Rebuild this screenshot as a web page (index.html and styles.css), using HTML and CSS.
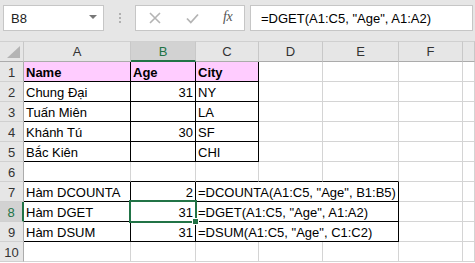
FILE: index.html
```html
<!DOCTYPE html>
<html>
<head>
<meta charset="utf-8">
<link rel="stylesheet" href="styles.css">
</head>
<body>
<div class="app">
  <div class="toolbar">
    <div class="namebox"><span>B8</span><span class="caret"></span></div>
    <div class="dots"><i></i><i></i><i></i></div>
    <div class="btns">
      <svg class="ico" width="12" height="12" viewBox="0 0 12 12"><path d="M1 1L11 11M11 1L1 11" stroke="#b4b4b4" stroke-width="1.6" fill="none"/></svg>
      <svg class="ico" width="13" height="11" viewBox="0 0 13 11"><path d="M1 5.5L4.8 9.5L12 1.5" stroke="#b4b4b4" stroke-width="1.8" fill="none"/></svg>
      <span class="fx">fx</span>
    </div>
    <div class="formula">=DGET(A1:C5, "Age", A1:A2)</div>
  </div>
  <div class="sheet">
    <div class="c hd corner"><span class="tri"></span></div>
    <div class="c hd">A</div><div class="c hd sel">B</div><div class="c hd">C</div><div class="c hd">D</div><div class="c hd">E</div><div class="c hd">F</div><div class="c hd"></div>

    <div class="c rh">1</div>
    <div class="c bk pk">Name</div><div class="c bk pk">Age</div><div class="c bk pk">City</div><div class="c"></div><div class="c"></div><div class="c"></div><div class="c"></div>

    <div class="c rh">2</div>
    <div class="c bk">Chung Đại</div><div class="c bk num">31</div><div class="c bk">NY</div><div class="c"></div><div class="c"></div><div class="c"></div><div class="c"></div>

    <div class="c rh">3</div>
    <div class="c bk">Tuấn Miên</div><div class="c bk num"></div><div class="c bk">LA</div><div class="c"></div><div class="c"></div><div class="c"></div><div class="c"></div>

    <div class="c rh">4</div>
    <div class="c bk">Khánh Tú</div><div class="c bk num">30</div><div class="c bk">SF</div><div class="c"></div><div class="c"></div><div class="c"></div><div class="c"></div>

    <div class="c rh">5</div>
    <div class="c bk">Bắc Kiên</div><div class="c bk num"></div><div class="c bk">CHI</div><div class="c"></div><div class="c"></div><div class="c"></div><div class="c"></div>

    <div class="c rh">6</div>
    <div class="c bb"></div><div class="c bb"></div><div class="c bb"></div><div class="c bb"></div><div class="c bb"></div><div class="c"></div><div class="c"></div>

    <div class="c rh">7</div>
    <div class="c bk">Hàm DCOUNTA</div><div class="c bk num">2</div><div class="c bk span3">=DCOUNTA(A1:C5, "Age", B1:B5)</div><div class="c"></div><div class="c"></div>

    <div class="c rh rsel">8</div>
    <div class="c bk">Hàm DGET</div><div class="c bk num">31</div><div class="c bk span3">=DGET(A1:C5, "Age", A1:A2)</div><div class="c"></div><div class="c"></div>

    <div class="c rh">9</div>
    <div class="c bk">Hàm DSUM</div><div class="c bk num">31</div><div class="c bk span3">=DSUM(A1:C5, "Age", C1:C2)</div><div class="c"></div><div class="c"></div>

    <div class="c rh">10</div>
    <div class="c"></div><div class="c"></div><div class="c"></div><div class="c"></div><div class="c"></div><div class="c"></div><div class="c"></div>

    <div class="selbox"><span class="handle"></span></div>
  </div>
</div>
</body>
</html>
```
FILE: styles.css
```css
* { box-sizing: border-box; }
html, body { margin: 0; padding: 0; }
body {
  width: 475px;
  height: 263px;
  overflow: hidden;
  background: #ffffff;
  font-family: "Liberation Sans", Arial, sans-serif;
  font-size: 13px;
  color: #000;
}
.toolbar {
  height: 41px;
  background: #e6e6e6;
  display: flex;
  align-items: flex-start;
  padding: 5px 2px 0 3px;
}
.namebox {
  width: 101px;
  height: 26px;
  background: #fff;
  border: 1px solid #c6c6c6;
  display: flex;
  align-items: center;
  justify-content: space-between;
  padding: 0 6px 0 7px;
  font-size: 13px;
  color: #222;
}
.caret {
  width: 0; height: 0;
  border-left: 4px solid transparent;
  border-right: 4px solid transparent;
  border-top: 4px solid #777;
  margin-top: -2px;
}
.dots {
  width: 31px;
  height: 26px;
  display: flex;
  flex-direction: column;
  align-items: center;
  justify-content: center;
  gap: 2px;
}
.dots i {
  display: block;
  width: 2px; height: 2px;
  background: #b0b0b0;
}
.btns {
  width: 110px;
  height: 26px;
  background: #fff;
  border: 1px solid #c6c6c6;
  display: flex;
  align-items: center;
  padding: 0 0 0 13px;
  gap: 0;
}
.btns .ico:first-child { margin-right: 25px; }
.btns .ico:nth-child(2) { margin-right: 24px; }
.fx {
  font-family: "Liberation Serif", "Times New Roman", serif;
  font-style: italic;
  font-size: 14px;
  color: #555;
  letter-spacing: -0.5px;
  margin-top: -2px;
}
.formula {
  flex: 1;
  margin-left: 5px;
  height: 26px;
  background: #fff;
  border: 1px solid #c6c6c6;
  padding: 5px 0 0 10px;
  line-height: 15px;
  font-size: 13px;
  color: #000;
}
.sheet {
  position: relative;
  display: grid;
  grid-template-columns: 24px 107px 65px 63px 64px 76px 64px 1fr;
  grid-template-rows: 21px;
  grid-auto-rows: 20px;
}
.c {
  border-right: 1px solid #d4d4d4;
  border-bottom: 1px solid #d4d4d4;
  padding: 2px 2px 0 2px;
  line-height: 17px;
  white-space: nowrap;
  overflow: hidden;
}
.hd {
  background: #e6e6e6;
  border-top: 1px solid #d0d0d0;
  border-right: 1px solid #c8c8c8;
  border-bottom: 1px solid #ababab;
  text-align: center;
  color: #333;
  padding-top: 1px;
}
.hd.sel {
  background: #d2d2d2;
  color: #217346;
  border-bottom: 2px solid #217346;
}
.corner { position: relative; }
.tri {
  position: absolute;
  right: 3px;
  bottom: 3px;
  width: 0; height: 0;
  border-left: 13px solid transparent;
  border-bottom: 12px solid #b4b4b4;
}
.rh {
  background: #e6e6e6;
  border-right: 1px solid #ababab;
  border-bottom: 1px solid #d0d0d0;
  text-align: center;
  color: #333;
  padding: 2px 0 0 0;
}
.rh.rsel {
  background: #d2d2d2;
  color: #217346;
  border-right: 2px solid #217346;
}
.bk {
  border-right-color: #000;
  border-bottom-color: #000;
}
.bb { border-bottom-color: #000; }
.pk {
  background: #ffccff;
  font-weight: bold;
}
.num { text-align: right; }
.span3 { grid-column: span 3; overflow: visible; }
.selbox {
  position: absolute;
  left: 129px;
  top: 159px;
  width: 68px;
  height: 23px;
  border: 2px solid #217346;
}
.handle {
  position: absolute;
  right: -4px;
  bottom: -4px;
  width: 7px;
  height: 7px;
  background: #217346;
  border: 1px solid #fff;
}
```
